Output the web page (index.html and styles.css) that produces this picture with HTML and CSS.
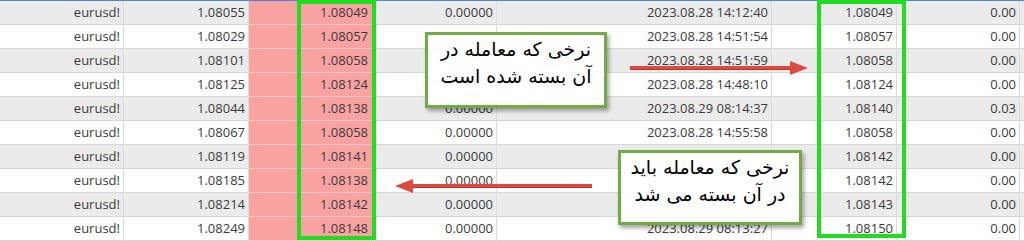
FILE: index.html
```html
<!DOCTYPE html>
<html lang="en">
<head>
<meta charset="utf-8">
<title>Trades</title>
<link rel="stylesheet" href="styles.css">
</head>
<body>
<div class="sheet">
  <div class="table">
    <div class="row alt"><div class="c">eurusd!</div><div class="c">1.08055</div><div class="c pink"></div><div class="c pink">1.08049</div><div class="c">0.00000</div><div class="c">2023.08.28 14:12:40</div><div class="c"></div><div class="c">1.08049</div><div class="c">0.00</div><div class="c last"></div></div>
    <div class="row"><div class="c">eurusd!</div><div class="c">1.08029</div><div class="c pink"></div><div class="c pink">1.08057</div><div class="c"></div><div class="c">2023.08.28 14:51:54</div><div class="c"></div><div class="c">1.08057</div><div class="c">0.00</div><div class="c last"></div></div>
    <div class="row alt"><div class="c">eurusd!</div><div class="c">1.08101</div><div class="c pink"></div><div class="c pink">1.08058</div><div class="c"></div><div class="c">2023.08.28 14:51:59</div><div class="c"></div><div class="c">1.08058</div><div class="c">0.00</div><div class="c last"></div></div>
    <div class="row"><div class="c">eurusd!</div><div class="c">1.08125</div><div class="c pink"></div><div class="c pink">1.08124</div><div class="c"></div><div class="c">2023.08.28 14:48:10</div><div class="c"></div><div class="c">1.08124</div><div class="c">0.00</div><div class="c last"></div></div>
    <div class="row alt"><div class="c">eurusd!</div><div class="c">1.08044</div><div class="c pink"></div><div class="c pink">1.08138</div><div class="c">0.00000</div><div class="c">2023.08.29 08:14:37</div><div class="c"></div><div class="c">1.08140</div><div class="c">0.03</div><div class="c last"></div></div>
    <div class="row"><div class="c">eurusd!</div><div class="c">1.08067</div><div class="c pink"></div><div class="c pink">1.08058</div><div class="c">0.00000</div><div class="c">2023.08.28 14:55:58</div><div class="c"></div><div class="c">1.08058</div><div class="c">0.00</div><div class="c last"></div></div>
    <div class="row alt"><div class="c">eurusd!</div><div class="c">1.08119</div><div class="c pink"></div><div class="c pink">1.08141</div><div class="c">0.00000</div><div class="c"></div><div class="c"></div><div class="c">1.08142</div><div class="c">0.00</div><div class="c last"></div></div>
    <div class="row"><div class="c">eurusd!</div><div class="c">1.08185</div><div class="c pink"></div><div class="c pink">1.08138</div><div class="c">0.00000</div><div class="c"></div><div class="c"></div><div class="c">1.08142</div><div class="c">0.00</div><div class="c last"></div></div>
    <div class="row alt"><div class="c">eurusd!</div><div class="c">1.08214</div><div class="c pink"></div><div class="c pink">1.08142</div><div class="c">0.00000</div><div class="c"></div><div class="c"></div><div class="c">1.08143</div><div class="c">0.00</div><div class="c last"></div></div>
    <div class="row"><div class="c">eurusd!</div><div class="c">1.08249</div><div class="c pink"></div><div class="c pink">1.08148</div><div class="c">0.00000</div><div class="c">2023.08.29 08:13:27</div><div class="c"></div><div class="c">1.08150</div><div class="c">0.00</div><div class="c last"></div></div>
  </div>

  <div class="frame frame-left"></div>
  <div class="frame frame-right"></div>

  <div class="note note-top" dir="rtl">نرخی که معامله در<br>آن بسته شده است</div>
  <div class="note note-bottom" dir="rtl">نرخی که معامله باید<br>در آن بسته می شد</div>

  <svg class="arrow arrow-right" width="190" height="24" viewBox="0 0 190 24">
    <rect x="0" y="9" width="166" height="4" fill="#dd4a3f"/>
    <rect x="0" y="12" width="166" height="1" fill="#b8352c"/>
    <polygon points="160,4 178,11 160,18" fill="#dd4a3f"/>
  </svg>
  <svg class="arrow arrow-left" width="210" height="24" viewBox="0 0 210 24">
    <rect x="14" y="10" width="183" height="4" fill="#dd4a3f"/>
    <rect x="14" y="13" width="183" height="1" fill="#b8352c"/>
    <polygon points="18,5 0,12 18,19" fill="#dd4a3f"/>
  </svg>
</div>
</body>
</html>
```

FILE: styles.css
```css
html, body {
  margin: 0;
  padding: 0;
  background: #ffffff;
}

.sheet {
  position: relative;
  width: 1024px;
  height: 241px;
  overflow: hidden;
  font-family: "Open Sans", "Noto Sans", sans-serif;
  font-size: 13px;
  color: #3b3b3b;
}

.table {
  border-top: 1px solid #4f87cf;
  display: flex;
  flex-direction: column;
}

.row {
  display: grid;
  grid-template-columns: 124px 125px 48px 75px 125px 275px 46px 79px 123px 4px;
  height: 24px;
  background: #ffffff;
}

.row.alt {
  background: #ebebeb;
}

.c {
  box-sizing: border-box;
  height: 24px;
  line-height: 23px;
  padding-right: 3px;
  text-align: right;
  white-space: nowrap;
  border-right: 1px solid #dcdcdc;
  border-bottom: 1px solid #d6d6d6;
}

.c.pink {
  background: #f8a2a2;
  border-right-color: #f8a2a2;
  border-bottom-color: #f4c6c6;
}

.c.last {
  border-right: none;
}

.frame {
  position: absolute;
  top: 0;
  box-sizing: border-box;
  border: 4px solid #22dc22;
}

.frame-left {
  left: 297px;
  width: 79px;
  height: 240px;
}

.frame-right {
  left: 817px;
  width: 89px;
  height: 238px;
}

.note {
  position: absolute;
  box-sizing: border-box;
  background: #ffffff;
  border: 3px solid #6fac46;
  box-shadow: 2px 3px 4px rgba(0, 0, 0, 0.35);
  font-family: "DejaVu Sans", sans-serif;
  font-size: 19px;
  line-height: 27px;
  color: #000000;
  text-align: center;
  padding-top: 1px;
}

.note-top {
  left: 425px;
  top: 32px;
  width: 182px;
  height: 76px;
}

.note-bottom {
  left: 618px;
  top: 150px;
  width: 184px;
  height: 75px;
}

.arrow {
  position: absolute;
}

.arrow-right {
  left: 630px;
  top: 57px;
}

.arrow-left {
  left: 395px;
  top: 174px;
}
```
